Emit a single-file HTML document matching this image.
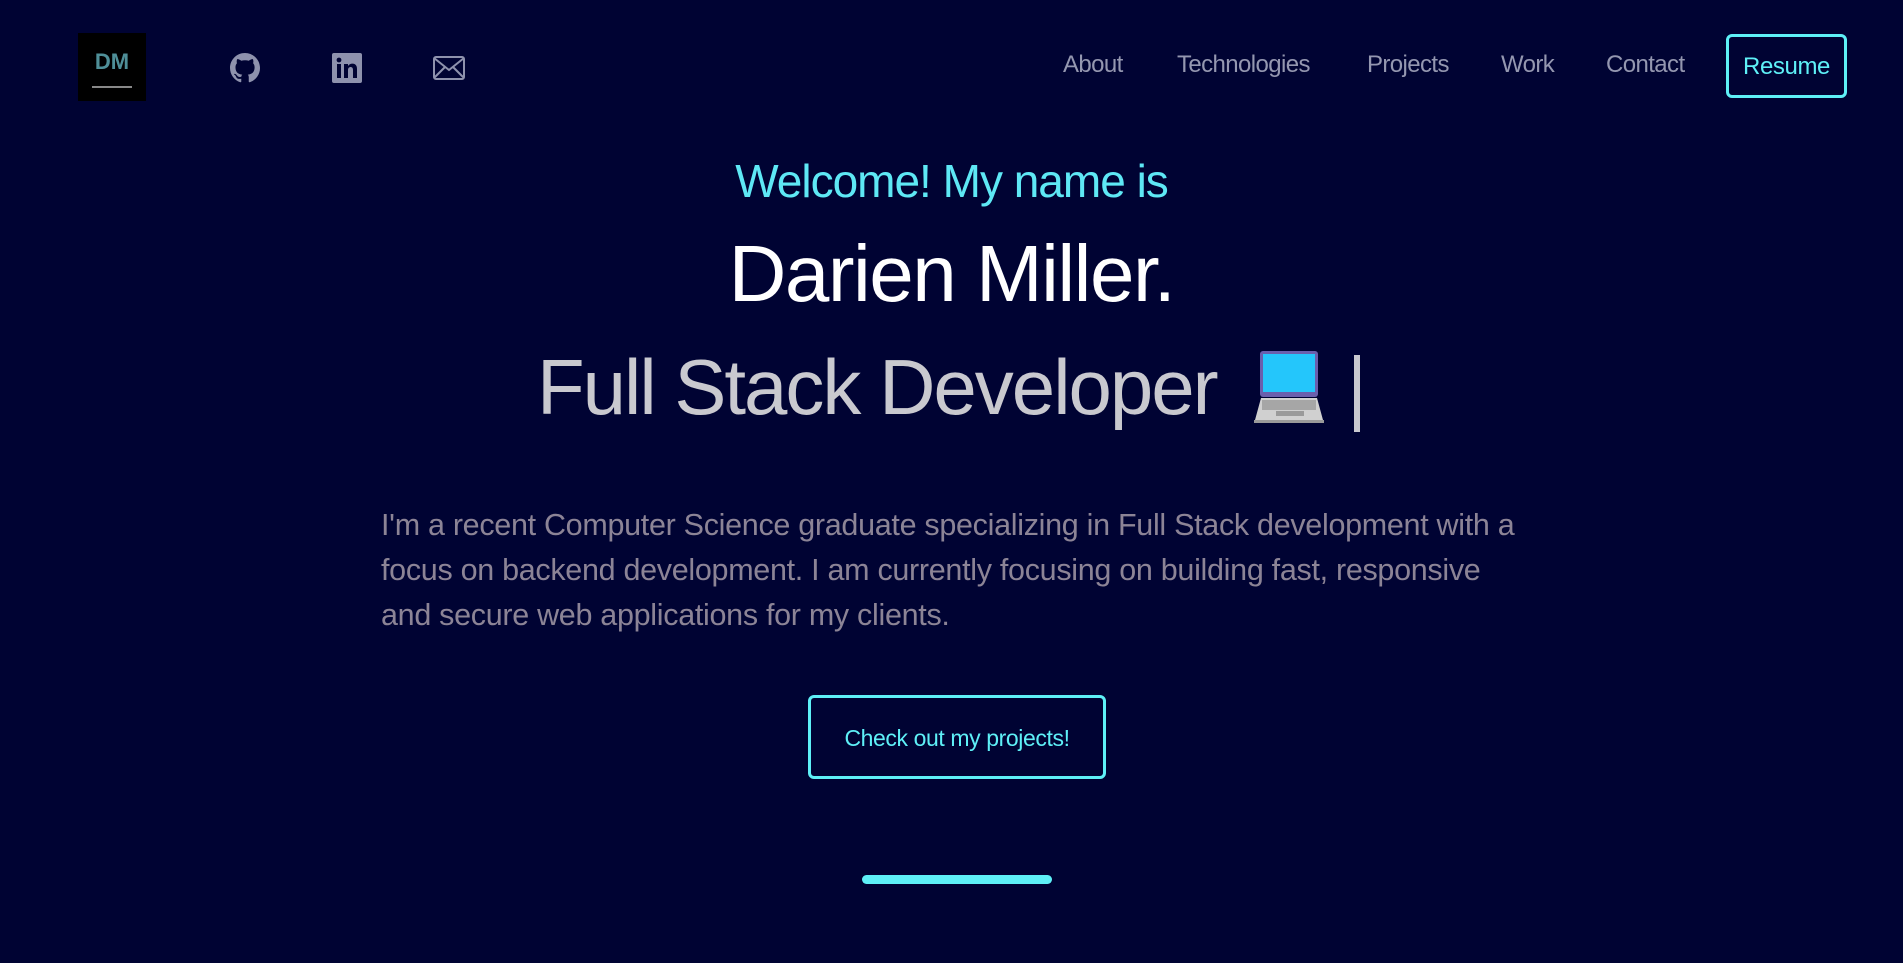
<!DOCTYPE html>
<html><head><meta charset="utf-8"><style>
*{margin:0;padding:0;box-sizing:border-box}
body{width:1903px;height:963px;background:#000333;font-family:"Liberation Sans",sans-serif;position:relative;overflow:hidden}
.a{position:absolute;white-space:nowrap}
.nav{font-size:24px;color:#9497b0;top:51px;letter-spacing:-0.6px;font-weight:300}
.c{left:0;width:1903px;text-align:center}
</style></head><body>
<div class="a" style="left:78px;top:33px;width:68px;height:68px;background:#000;">
 <div class="a" style="left:0;width:68px;top:16px;text-align:center;font-weight:bold;font-size:22px;color:#4f8f98;">DM</div>
 <div class="a" style="left:14px;width:40px;top:53px;height:2px;background:#888"></div>
</div>
<svg class="a" style="left:230px;top:53px" width="30" height="30" viewBox="0 0 16 16"><path fill="#8e92ad" d="M8 0C3.58 0 0 3.58 0 8c0 3.540 2.29 6.53 5.470 7.59.4.07.55-.17.55-.38 0-.19-.01-.82-.01-1.49-2.01.37-2.53-.49-2.69-.94-.09-.23-.48-.94-.82-1.130-.28-.15-.68-.52-.01-.53.63-.01 1.08.58 1.230.82.72 1.21 1.870.87 2.330.66.07-.52.28-.87.51-1.07-1.78-.2-3.64-.89-3.64-3.950 0-.87.31-1.59.82-2.150-.08-.2-.36-1.020.08-2.120 0 0 .67-.21 2.2.82.64-.18 1.32-.27 2-.27.68 0 1.360.09 2 .27 1.53-1.04 2.2-.82 2.2-.82.44 1.1.16 1.920.08 2.120.51.56.82 1.270.82 2.150 0 3.07-1.87 3.75-3.65 3.950.29.25.54.73.54 1.480 0 1.07-.01 1.93-.01 2.2 0 .21.15.46.55.38A8.013 8.013 0 0016 8c0-4.42-3.58-8-8-8z"/></svg>
<svg class="a" style="left:332px;top:53px" width="30" height="30" viewBox="0 0 30 30"><rect width="30" height="30" rx="2" fill="#8e92ad"/><rect x="5" y="11" width="4" height="14" fill="#000333"/><circle cx="7" cy="7" r="2.4" fill="#000333"/><path d="M12 11h4v2c1-1.5 2.5-2.4 4.5-2.4 3 0 4.5 2 4.5 5.5V25h-4v-8c0-2-.8-3-2.300-3-1.6 0-2.700 1.100-2.700 3v8h-4z" fill="#000333"/></svg>
<svg class="a" style="left:433px;top:56px" width="32" height="24" viewBox="0 0 32 24"><rect x="1" y="1" width="30" height="22" rx="2" fill="none" stroke="#8e92ad" stroke-width="2"/><path d="M1 2L16 14L31 2M1 22L12 11M31 22L20 11" fill="none" stroke="#8e92ad" stroke-width="2"/></svg>
<div class="a nav" style="left:1063px">About</div>
<div class="a nav" style="left:1177px">Technologies</div>
<div class="a nav" style="left:1367px">Projects</div>
<div class="a nav" style="left:1501px">Work</div>
<div class="a nav" style="left:1606px">Contact</div>
<div class="a" style="left:1726px;top:34px;width:121px;height:64px;border:3px solid #5ef0f7;border-radius:6px;color:#5ef0f7;font-size:24px;text-align:center;line-height:60px;letter-spacing:-0.4px">Resume</div>
<div class="a c" style="top:154px;font-size:46px;color:#5ee8f5;letter-spacing:-1px">Welcome! My name is</div>
<div class="a c" style="top:228px;font-size:80px;color:#fff;letter-spacing:-1.5px">Darien Miller.</div>
<div class="a" style="left:537px;top:342px;font-size:78px;color:#c9c9cf;letter-spacing:-2px">Full Stack Developer</div>
<svg class="a" style="left:1254px;top:350px" width="70" height="74" viewBox="0 0 70 74"><rect x="6" y="1" width="58" height="46" rx="3" fill="#6a5fad"/><rect x="9" y="4" width="52" height="38" fill="#24c6fb"/><path d="M7 48h56l6 22H1z" fill="#d0d0d0"/><rect x="8" y="50" width="54" height="10" fill="#a6a6a6"/><rect x="22" y="61" width="28" height="5" fill="#9a9a9a"/><rect x="0" y="70" width="70" height="3" fill="#9a9a9a"/></svg>
<div class="a" style="left:1354px;top:355px;width:6px;height:77px;background:#c9c9cf"></div>
<div class="a" style="left:381px;top:503px;width:1150px;font-size:30.5px;line-height:45px;color:#8c8496;white-space:normal;font-weight:300;letter-spacing:-0.3px">I'm a recent Computer Science graduate specializing in Full Stack development with a focus on backend development. I am currently focusing on building fast, responsive and secure web applications for my clients.</div>
<div class="a" style="left:808px;top:695px;width:298px;height:84px;border:3px solid #5ef0f7;border-radius:6px;color:#5ef0f7;font-size:23px;text-align:center;line-height:80px;letter-spacing:-0.4px">Check out my projects!</div>
<div class="a" style="left:862px;top:875px;width:190px;height:9px;border-radius:5px;background:#5ef0f7"></div>
</body></html>
